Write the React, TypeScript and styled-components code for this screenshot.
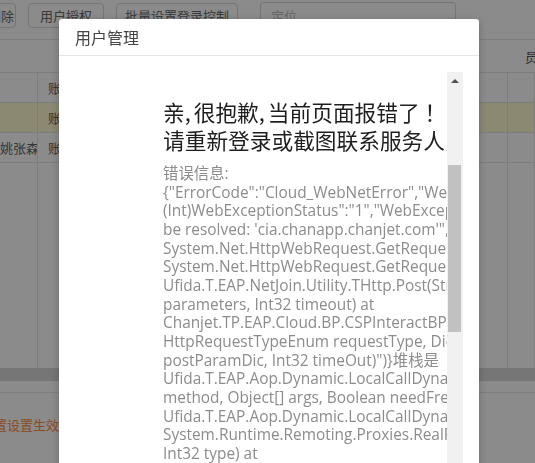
import React from 'react';
import styled, { createGlobalStyle, css } from 'styled-components';

const Global = createGlobalStyle`
  html, body {
    margin: 0;
    padding: 0;
    background: #fff;
    overflow: hidden;
  }
  body {
    font-family: "Noto Sans CJK SC", "Open Sans", sans-serif;
  }
`;

const Page = styled.div`
  width: 535px;
  height: 463px;
  display: flex;
  flex-direction: column;
  background: #fff;
  overflow: hidden;
`;

const Toolbar = styled.div`
  height: 40px;
  display: flex;
  align-items: flex-start;
  gap: 12px;
  padding: 3px 0 0 0;
  margin-left: -14px;
  box-sizing: border-box;
  border-bottom: 1px solid #e6e6e6;
`;

const ToolButton = styled.div<{ w: number }>`
  width: ${({ w }) => w}px;
  height: 25px;
  box-sizing: border-box;
  border: 1px solid #d6d6d6;
  border-radius: 4px;
  font-size: 13px;
  line-height: 23px;
  color: #6a6a6a;
  text-align: center;
  flex-shrink: 0;
`;

const Search = styled.div`
  margin-left: 10px;
  width: 196px;
  height: 27px;
  margin-top: -1px;
  box-sizing: border-box;
  border: 1px solid #d6d6d6;
  border-radius: 3px;
  padding-left: 10px;
  font-size: 13px;
  line-height: 25px;
  color: #bdbdbd;
  flex-shrink: 0;
`;

const HeaderRow = styled.div`
  height: 32px;
  display: flex;
  justify-content: flex-end;
  align-items: center;
  border-bottom: 1px solid #e6e6e6;
  font-size: 13px;
  color: #555;
  margin-right: -16px;
`;

const Row = styled.div<{ active?: boolean }>`
  height: 29px;
  display: grid;
  grid-template-columns: 38px 470px 1fr;
  border-bottom: 1px solid #e6e6e6;
  font-size: 13px;
  color: #666;
  ${({ active }) =>
    active &&
    css`
      background: #fffbd2;
    `}
`;

const Cell = styled.div`
  border-right: 1px solid #e6e6e6;
  line-height: 29px;
  padding-left: 10px;
  white-space: nowrap;
  overflow: hidden;
  &:first-child {
    padding-left: 0;
  }
`;

const Filler = styled.div`
  height: 205px;
  display: grid;
  grid-template-columns: 38px 470px 1fr;
`;

const Band = styled.div`
  height: 13px;
  background: #d9d9d9;
`;

const Rule = styled.div`
  height: 11px;
  border-bottom: 1px solid #e8e8e8;
`;

const Hint = styled.div`
  padding-top: 22px;
  margin-left: -6px;
  font-size: 13px;
  color: #ff8a3a;
  white-space: nowrap;
`;

const Overlay = styled.div`
  position: fixed;
  inset: 0;
  background: rgba(0, 0, 0, 0.455);
`;

const Modal = styled.div`
  position: fixed;
  left: 59px;
  top: 19px;
  width: 420px;
  bottom: -20px;
  background: #fff;
  border-radius: 3px 3px 0 0;
  box-shadow: 0 2px 8px rgba(0, 0, 0, 0.25);
  display: flex;
  flex-direction: column;
`;

const ModalHeader = styled.div`
  height: 37px;
  box-sizing: border-box;
  padding-left: 16px;
  border-bottom: 1px solid #e5e5e5;
  font-size: 16px;
  line-height: 37px;
  color: #444;
`;

const ModalBody = styled.div`
  flex: 1;
  display: flex;
  padding: 16px 16px 0 16px;
  overflow: hidden;
`;

const Content = styled.div`
  flex: 1;
  overflow: hidden;
  padding: 26px 0 0 88px;
`;

const Title = styled.div`
  font-family: "Noto Sans CJK SC", sans-serif;
  font-size: 21.7px;
  line-height: 28px;
  color: #1e1e1e;
  white-space: pre;
`;

const Comma = styled.span`
  letter-spacing: 3px;
`;

const Detail = styled.div`
  margin-top: 11px;
  font-family: "Open Sans", "Noto Sans CJK SC", sans-serif;
  font-size: 15.4px;
  line-height: 18.67px;
  color: #8c8c8c;
  white-space: pre;
`;

const Scrollbar = styled.div`
  width: 16px;
  background: #f1f1f1;
  display: flex;
  flex-direction: column;
  align-items: center;
`;

const Arrow = styled.div`
  margin-top: 7px;
  width: 0;
  height: 0;
  border-left: 4px solid transparent;
  border-right: 4px solid transparent;
  border-bottom: 4px solid #505050;
`;

const Thumb = styled.div`
  margin-top: 82px;
  width: 13px;
  height: 167px;
  margin-left: -1px;
  background: #c1c1c1;
`;

const detail = [
  '错误信息:',
  '{"ErrorCode":"Cloud_WebNetError","WebExceptionStatus":',
  '(Int)WebExceptionStatus":"1","WebExceptionMessage":"The remote name could not',
  "be resolved: 'cia.chanapp.chanjet.com'\",\"StackTrace\":\"   at",
  'System.Net.HttpWebRequest.GetRequestStream(TransportContext& context) at',
  'System.Net.HttpWebRequest.GetRequestStream() at',
  'Ufida.T.EAP.NetJoin.Utility.THttp.Post(String url, Dictionary`2',
  'parameters, Int32 timeout) at',
  'Chanjet.TP.EAP.Cloud.BP.CSPInteractBP.Request(String url,',
  'HttpRequestTypeEnum requestType, Dictionary`2',
  'postParamDic, Int32 timeOut)")}堆栈是',
  'Ufida.T.EAP.Aop.Dynamic.LocalCallDynamicProxy.Invoke(MethodInfo',
  'method, Object[] args, Boolean needFreshContext) at',
  'Ufida.T.EAP.Aop.Dynamic.LocalCallDynamicProxy.Invoke(IMessage',
  'System.Runtime.Remoting.Proxies.RealProxy.PrivateInvoke(MessageData& msgData,',
  'Int32 type) at',
].join('\n');

const App: React.FC = () => {
  return (
    <>
      <Global />
      <Page>
        <Toolbar>
          <ToolButton w={30}>删除</ToolButton>
          <ToolButton w={76}>用户授权</ToolButton>
          <ToolButton w={122}>批量设置登录控制</ToolButton>
          <Search>定位</Search>
        </Toolbar>
        <HeaderRow>员工</HeaderRow>
        <Row>
          <Cell />
          <Cell>账号</Cell>
          <Cell />
        </Row>
        <Row active>
          <Cell />
          <Cell>账号</Cell>
          <Cell />
        </Row>
        <Row>
          <Cell>姚张森公</Cell>
          <Cell>账号</Cell>
          <Cell />
        </Row>
        <Filler>
          <Cell />
          <Cell />
          <Cell />
        </Filler>
        <Band />
        <Rule />
        <Hint>置设置生效！</Hint>
      </Page>
      <Overlay />
      <Modal>
        <ModalHeader>用户管理</ModalHeader>
        <ModalBody>
          <Content>
            <Title>
              亲<Comma>,</Comma>很抱歉<Comma>,</Comma>当前页面报错了 ！{'\n'}
              请重新登录或截图联系服务人员
            </Title>
            <Detail>{detail}</Detail>
          </Content>
          <Scrollbar>
            <Arrow />
            <Thumb />
          </Scrollbar>
        </ModalBody>
      </Modal>
    </>
  );
};

export default App;
